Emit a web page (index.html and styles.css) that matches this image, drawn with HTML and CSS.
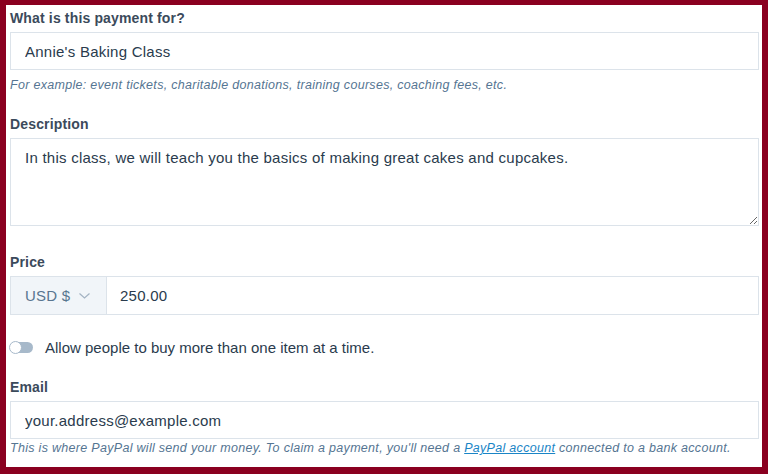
FILE: index.html
```html
<!DOCTYPE html>
<html lang="en">
<head>
<meta charset="utf-8">
<title>Payment form</title>
<link rel="stylesheet" href="styles.css">
</head>
<body>
<div class="panel">
  <label class="label" for="title">What is this payment for?</label>
  <input class="input" id="title" type="text" value="Annie's Baking Class">
  <p class="help help-first">For example: event tickets, charitable donations, training courses, coaching fees, etc.</p>

  <label class="label label-desc" for="desc">Description</label>
  <textarea class="textarea" id="desc">In this class, we will teach you the basics of making great cakes and cupcakes.</textarea>

  <label class="label label-price" for="price">Price</label>
  <div class="price-group">
    <div class="currency">
      <span>USD $</span>
      <svg class="chevron" width="11" height="6" viewBox="0 0 11 6"><path d="M0.5 0.5 L5.5 5 L10.5 0.5" fill="none" stroke="#a3b3c3" stroke-width="1.2"/></svg>
    </div>
    <input class="price-input" id="price" type="text" value="250.00">
  </div>

  <div class="toggle-row">
    <span class="toggle"><span class="knob"></span></span>
    <span class="toggle-label">Allow people to buy more than one item at a time.</span>
  </div>

  <label class="label label-email" for="email">Email</label>
  <input class="input" id="email" type="text" value="your.address@example.com">
  <p class="help help-last">This is where PayPal will send your money. To claim a payment, you'll need a <a href="#">PayPal account</a> connected to a bank account.</p>
</div>
</body>
</html>
```

FILE: styles.css
```css
html, body {
  margin: 0;
  padding: 0;
}

body {
  background: #8a0020;
  font-family: "Liberation Sans", Arial, sans-serif;
  width: 768px;
  height: 474px;
  overflow: hidden;
}

.panel {
  margin: 5px 6px 0 6px;
  height: 462px;
  box-sizing: border-box;
  background: #ffffff;
  padding: 4px 3px 0 4px;
}

.label {
  display: block;
  font-size: 14px;
  font-weight: bold;
  letter-spacing: 0.15px;
  line-height: 18px;
  height: 18px;
  color: #3b4a5b;
  margin-bottom: 5px;
}

.label-desc { margin-top: 22px; }
.label-price { margin-top: 27px; }
.label-email { margin-top: 21px; }

.input,
.textarea,
.price-input {
  display: block;
  box-sizing: border-box;
  width: 100%;
  margin: 0;
  border: 1px solid #dce3ea;
  border-radius: 0;
  background: #ffffff;
  color: #2a3b4d;
  font-family: "Liberation Sans", Arial, sans-serif;
  font-size: 15px;
  letter-spacing: 0.25px;
  outline: none;
}

.input {
  height: 38px;
  padding: 0 14px;
}

.textarea {
  height: 88px;
  padding: 8px 14px;
  line-height: 22px;
  resize: vertical;
}

.help {
  margin: 0;
  font-size: 12.5px;
  letter-spacing: 0.3px;
  font-style: italic;
  line-height: 16px;
  color: #557592;
}

.help-first { margin-top: 7px; }
.help-last { margin-top: 2px; line-height: 14px; }

.help a {
  color: #1a85c6;
  text-decoration: underline;
}

.price-group {
  display: flex;
  height: 39px;
  box-sizing: border-box;
  border: 1px solid #dce3ea;
}

.currency {
  display: flex;
  align-items: center;
  gap: 9px;
  width: 96px;
  flex: none;
  box-sizing: border-box;
  padding-left: 14px;
  background: #f1f5f9;
  border-right: 1px solid #dce3ea;
  color: #587590;
  font-size: 15px;
  letter-spacing: 0.2px;
}

.chevron { display: block; margin-top: 1px; }

.price-input {
  flex: 1;
  border: none;
  height: 100%;
  padding: 0 13px;
}

.toggle-row {
  display: flex;
  align-items: center;
  height: 20px;
  margin-top: 22px;
  gap: 12px;
}

.toggle {
  position: relative;
  display: block;
  width: 23px;
  height: 11px;
  border-radius: 6px;
  background: #a7b9ca;
  flex: none;
}

.knob {
  position: absolute;
  left: -1px;
  top: -1px;
  width: 13px;
  height: 13px;
  box-sizing: border-box;
  border-radius: 50%;
  background: #ffffff;
  border: 1px solid #a7b9ca;
}

.toggle-label {
  font-size: 15px;
  color: #2a3b4d;
}
```
